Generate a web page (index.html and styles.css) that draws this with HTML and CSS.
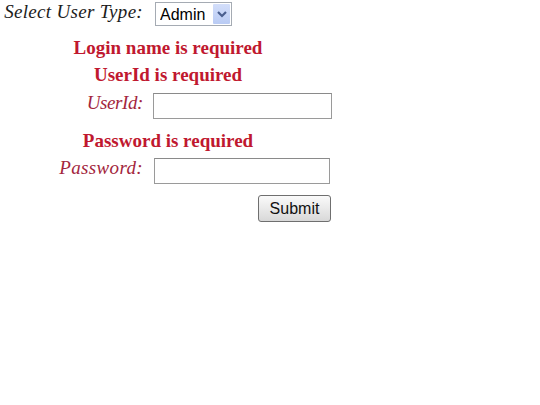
FILE: index.html
```html
<!DOCTYPE html>
<html>
<head>
<meta charset="utf-8">
<link rel="stylesheet" href="styles.css">
</head>
<body>
<form class="login">
  <div class="row row-type">
    <label class="label label-type">Select User Type:</label>
    <div class="select-wrap">
      <select class="select"><option>Admin</option></select>
      <span class="select-btn"><svg width="10" height="8" viewBox="0 0 10 8"><path d="M1 2 L5 6 L9 2" fill="none" stroke="#4a5f8f" stroke-width="2.2"/></svg></span>
    </div>
  </div>
  <div class="error err-login">Login name is required</div>
  <div class="error err-user">UserId is required</div>
  <div class="row row-user">
    <label class="label label-field label-user">UserId:</label>
    <input class="field" type="text">
  </div>
  <div class="error err-pass">Password is required</div>
  <div class="row row-pass">
    <label class="label label-field label-pass">Password:</label>
    <input class="field field-pass" type="password">
  </div>
  <div class="row row-submit">
    <button class="submit" type="button">Submit</button>
  </div>
</form>
</body>
</html>
```
FILE: styles.css
```css
html, body {
  margin: 0;
  padding: 0;
  background: #ffffff;
}
body {
  font-family: "Liberation Serif", "Times New Roman", serif;
}
.login {
  width: 336px;
  padding-top: 2px;
  display: flex;
  flex-direction: column;
}
.row {
  display: flex;
  align-items: flex-start;
}
.label {
  width: 143px;
  flex: none;
  text-align: right;
  font-style: italic;
  font-size: 19px;
  line-height: 20px;
}
.label-type {
  color: #1c1c1c;
  letter-spacing: 0.3px;
}
.label-field {
  color: #a3263d;
}
.label-user {
  letter-spacing: -0.4px;
}
.label-pass {
  letter-spacing: 0.35px;
}
.row-type {
  height: 24px;
}
.select-wrap {
  position: relative;
  margin-left: 12px;
  width: 77px;
  height: 24px;
}
.select {
  appearance: none;
  -webkit-appearance: none;
  box-sizing: border-box;
  width: 77px;
  height: 24px;
  margin: 0;
  padding: 0 0 0 4px;
  border: 1px solid #a5abb3;
  border-radius: 0;
  background: #ffffff;
  font-family: "Liberation Sans", Arial, sans-serif;
  font-size: 16px;
  color: #000;
}
.select-btn {
  position: absolute;
  top: 2px;
  right: 2px;
  width: 17px;
  height: 20px;
  background: linear-gradient(#d3defa, #b9cbf4);
  border-radius: 1px;
  display: flex;
  align-items: center;
  justify-content: center;
}
.error {
  color: #c0182f;
  font-weight: bold;
  font-size: 19px;
  line-height: 20px;
  text-align: center;
}
.err-login {
  margin-top: 12px;
}
.err-user {
  margin-top: 7px;
}
.row-user {
  margin-top: 8px;
}
.err-pass {
  margin-top: 12px;
}
.row-pass {
  margin-top: 7px;
}
.field {
  box-sizing: border-box;
  margin: 0 0 0 10px;
  width: 179px;
  height: 26px;
  border: 1px solid #9a9a9a;
  border-top-color: #8a8a8a;
  padding: 0 3px;
  background: #fff;
  font-size: 16px;
}
.field-pass {
  margin-left: 11px;
  width: 176px;
}
.row-submit {
  margin-top: 11px;
  justify-content: flex-end;
  padding-right: 5px;
}
.submit {
  box-sizing: border-box;
  width: 73px;
  height: 27px;
  margin: 0;
  padding: 0;
  border: 1px solid #6f6f6f;
  border-radius: 3px;
  background: linear-gradient(#fafafa, #e6e6e6 60%, #d8d8d8);
  font-family: "Liberation Sans", Arial, sans-serif;
  font-size: 16px;
  color: #111;
}
```
